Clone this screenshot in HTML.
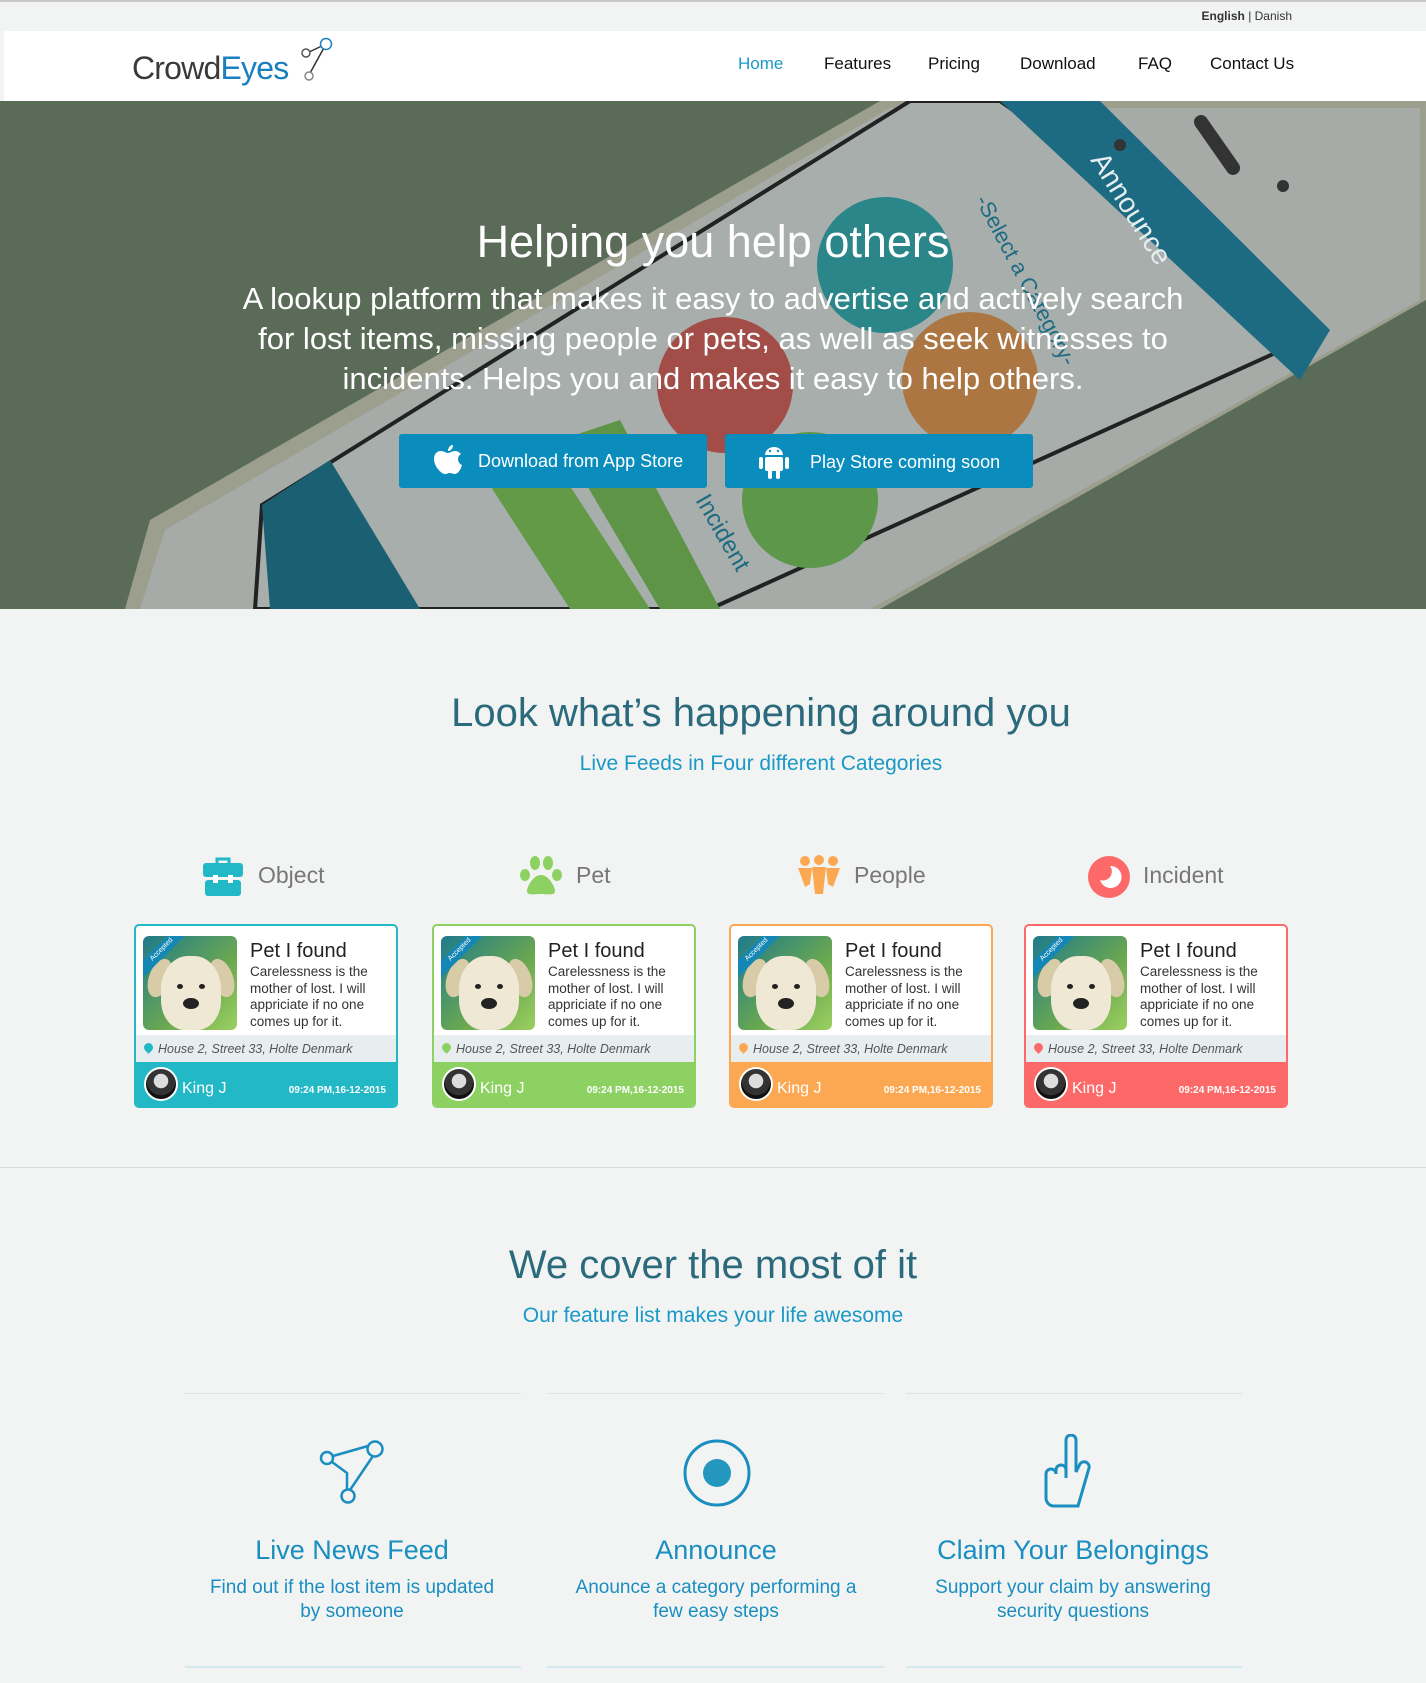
<!DOCTYPE html>
<html><head><meta charset="utf-8">
<style>
*{margin:0;padding:0;box-sizing:border-box}
body{width:1426px;height:1683px;background:#f2f4f3;font-family:"Liberation Sans",sans-serif;position:relative;overflow:hidden}
.abs{position:absolute}
.topbar{left:0;top:0;width:1426px;height:31px;background:#f2f4f3;border-top:2px solid #c8c8c8}
.lang{right:134px;top:9px;font-size:12px;color:#333}
.header{left:4px;top:31px;width:1422px;height:70px;background:#fff}
.nav a{position:absolute;top:54px;font-size:17px;color:#111;text-decoration:none}
.hero{left:0;top:101px;width:1426px;height:508px;overflow:hidden;background:#5b6d58}
.c{text-align:center;width:1426px;left:0}
.c2{text-align:center;width:1426px;left:48px}
.btn{top:434px;height:54px;width:308px;background:#0a8dbd;border-radius:3px;color:#fff;font-size:18px}
.cat{top:862px;font-size:23px;color:#777}
.card{top:924px;width:264px;height:184px;border:2px solid;border-radius:5px;background:#fff;overflow:hidden}
.card .img{position:absolute;left:7px;top:10px;width:94px;height:94px;border-radius:6px;background:linear-gradient(135deg,#1f7a8c,#6aa850 60%,#9cd060);overflow:hidden}
.card .dog{position:absolute;left:18px;top:20px;width:60px;height:74px;border-radius:45% 45% 40% 40%;background:#efe8d4}
.card .ear1,.card .ear2{position:absolute;top:22px;width:22px;height:40px;border-radius:50%;background:#d8cba8}
.card .ear1{left:6px;transform:rotate(20deg)}.card .ear2{left:68px;transform:rotate(-20deg)}
.card .nose{position:absolute;left:40px;top:62px;width:16px;height:11px;border-radius:50%;background:#222}
.card .e1,.card .e2{position:absolute;top:48px;width:6px;height:5px;border-radius:50%;background:#222}
.card .e1{left:34px}.card .e2{left:56px}
.card .rib{position:absolute;left:-16px;top:8px;width:70px;height:12px;background:#1487b5;transform:rotate(-45deg);color:#fff;font-size:7px;text-align:center;line-height:12px}
.card h4{position:absolute;left:114px;top:14px;font-size:20px;font-weight:normal;color:#222}
.card p{position:absolute;left:114px;top:38px;width:140px;font-size:13.5px;line-height:16.5px;color:#333}
.card .addr{position:absolute;left:0;top:109px;width:100%;height:27px;background:#e8eef0;font-size:12.5px;font-style:italic;color:#555;padding:7px 0 0 22px}
.card .pin{position:absolute;left:8px;top:8px;width:9px;height:9px;border-radius:50% 50% 50% 0;transform:rotate(-45deg)}
.card .foot{position:absolute;left:0;top:136px;width:100%;height:46px;color:#fff}
.card .av{position:absolute;left:8px;top:5px;width:34px;height:34px;border-radius:50%;background:radial-gradient(circle at 50% 40%,#ddd 0 30%,#333 32% 60%,#111 62%);border:2px solid #fff}
.card .nm{position:absolute;left:46px;top:18px;font-size:16px}
.card .dt{position:absolute;right:10px;top:23px;font-size:10px;font-weight:bold}
.h2{font-size:40px;color:#2b6a7c}
.sub{font-size:21px;color:#1a98c6}
.ln{height:1px;background:#dde3e3}
.bl{height:2px;background:#d3e8ef}
.fh{font-size:27px;color:#1a8ec0;text-align:center;width:360px}
.ft{font-size:19px;color:#1a8ec0;text-align:center;width:300px;line-height:24px}
</style></head><body>
<div class="abs topbar"></div>
<div class="abs lang"><b>English</b> | Danish</div>
<div class="abs header"></div>
<div class="abs" style="left:132px;top:50px;font-size:32px;color:#3a3a3a;letter-spacing:-0.8px">Crowd<span style="color:#1a7fc0">Eyes</span></div>
<svg class="abs" style="left:298px;top:36px" width="36" height="46" viewBox="0 0 36 46"><g fill="#fff" stroke-width="1.5"><line x1="9" y1="17" x2="28" y2="8" stroke="#333"/><line x1="28" y1="8" x2="11" y2="39" stroke="#333"/><circle cx="28" cy="8" r="5.5" stroke="#1a7fc0"/><circle cx="8" cy="17" r="4" stroke="#555"/><circle cx="11" cy="40" r="4" stroke="#888"/></g></svg>
<div class="nav">
<a style="left:738px;color:#1a9ac8">Home</a><a style="left:824px">Features</a><a style="left:928px">Pricing</a><a style="left:1020px">Download</a><a style="left:1138px">FAQ</a><a style="left:1210px">Contact Us</a>
</div>

<div class="abs hero">
<svg width="1426" height="508" viewBox="0 101 1426 508" style="position:absolute;left:0;top:0">
<rect x="0" y="101" width="1426" height="508" fill="#5a6c57"/>
<polygon points="125,609 150,520 880,101 1426,101 1426,300 880,609" fill="#9d9f8e"/>
<polygon points="140,609 165,530 890,108 1420,108 1420,300 870,609" fill="#a7aba8"/>
<polygon points="255,609 262,505 910,101 1000,101 1326,330 710,609" fill="#a8aeac" stroke="#222" stroke-width="4"/>
<polygon points="1000,101 1100,101 1330,330 1300,380" fill="#1d6b82"/>
<polygon points="262,505 330,460 420,609 270,609" fill="#1a5f72"/>
<circle cx="1120" cy="145" r="6" fill="#333"/><rect x="1210" y="110" width="14" height="70" rx="7" fill="#333" transform="rotate(-35 1217 145)"/>
<circle cx="1283" cy="186" r="6" fill="#333"/>
<circle cx="885" cy="265" r="68" fill="#2b8689"/>
<circle cx="725" cy="385" r="68" fill="#a24d48"/>
<circle cx="970" cy="380" r="68" fill="#ac7643"/>
<circle cx="810" cy="500" r="68" fill="#5c974a"/>
<polygon points="480,470 540,440 650,609 570,609" fill="#629a48"/>
<polygon points="560,440 620,420 720,609 660,609" fill="#5e9446"/>
<text x="1090" y="160" fill="#e6eef0" font-size="28" transform="rotate(58 1090 160)">Announce</text>
<text x="975" y="200" fill="#1d6b82" font-size="22" transform="rotate(62 975 200)">-Select a Category-</text>
<text x="695" y="500" fill="#1d6b82" font-size="24" transform="rotate(60 695 500)">Incident</text>
</svg>
</div>
<div class="abs c" style="top:216px;font-size:45px;color:#fff">Helping you help others</div>
<div class="abs c" style="top:279px;font-size:31px;line-height:40px;color:#fff">A lookup platform that makes it easy to advertise and actively search<br>for lost items, missing people or pets, as well as seek witnesses to<br>incidents. Helps you and makes it easy to help others.</div>
<div class="abs btn" style="left:399px"><svg class="abs" style="left:34px;top:10px" width="30" height="34" viewBox="0 0 30 34"><path d="M20 1c0 3-2 6-5 6 0-3 2-6 5-6zM15 9c2 0 4-2 7-2 3 0 5 2 6 3-4 2-4 9 1 11-1 4-4 9-7 9-2 0-3-1-5-1s-3 1-5 1C8 30 1 22 1 15 1 10 4 7 8 7c3 0 5 2 7 2z" fill="#fff"/></svg><span class="abs" style="left:79px;top:17px">Download from App Store</span></div>
<div class="abs btn" style="left:725px"><svg class="abs" style="left:34px;top:10px" width="30" height="36" viewBox="0 0 30 36"><g fill="#fff"><path d="M6 11a9 8 0 0 1 18 0z"/><rect x="6" y="13" width="18" height="14" rx="2"/><rect x="0" y="13" width="4" height="12" rx="2"/><rect x="26" y="13" width="4" height="12" rx="2"/><rect x="9" y="25" width="4" height="10" rx="2"/><rect x="17" y="25" width="4" height="10" rx="2"/></g><circle cx="11" cy="7" r="1.2" fill="#0a8dbd"/><circle cx="19" cy="7" r="1.2" fill="#0a8dbd"/></svg><span class="abs" style="left:85px;top:18px">Play Store coming soon</span></div>

<div class="abs c2 h2" style="top:691px">Look what’s happening around you</div>
<div class="abs c2 sub" style="top:752px">Live Feeds in Four different Categories</div>

<svg class="abs" style="left:203px;top:856px" width="40" height="40" viewBox="0 0 40 40"><path d="M14 7V3h12v4" stroke="#22b8c6" stroke-width="3" fill="none"/><rect x="0" y="7" width="40" height="14" rx="3" fill="#22b8c6"/><rect x="2" y="24" width="36" height="16" rx="3" fill="#22b8c6"/><rect x="10" y="19" width="5" height="8" fill="#fff"/><rect x="25" y="19" width="5" height="8" fill="#fff"/></svg>
<div class="abs cat" style="left:258px">Object</div>
<svg class="abs" style="left:520px;top:855px" width="42" height="42" viewBox="0 0 42 42" fill="#8dd162"><ellipse cx="15" cy="8" rx="5" ry="7"/><ellipse cx="28" cy="8" rx="5" ry="7"/><ellipse cx="5" cy="20" rx="5" ry="6"/><ellipse cx="37" cy="20" rx="5" ry="6"/><path d="M21 20c-8 0-14 12-14 16 0 5 7 3 14 3s14 2 14-3c0-4-6-16-14-16z"/></svg>
<div class="abs cat" style="left:576px">Pet</div>
<svg class="abs" style="left:797px;top:855px" width="44" height="42" viewBox="0 0 44 42" fill="#fca853"><circle cx="8" cy="6" r="5"/><circle cx="22" cy="5" r="5"/><circle cx="36" cy="6" r="5"/><path d="M1 13h14l-2 16-5 3z"/><path d="M29 13h14l-7 19-5-3z"/><path d="M15 12h14l-3 27h-8z"/></svg>
<div class="abs cat" style="left:854px">People</div>
<svg class="abs" style="left:1088px;top:856px" width="42" height="42" viewBox="0 0 42 42"><circle cx="21" cy="21" r="21" fill="#fd6868"/><path d="M22 10a11 11 0 1 1-10 14 9 9 0 0 0 10-14z" fill="#fff"/></svg>
<div class="abs cat" style="left:1143px">Incident</div>

<!-- cards -->
<div class="abs card" style="left:134px;border-color:#22b8c6"><div class="img"><div class="ear1"></div><div class="ear2"></div><div class="dog"></div><div class="e1"></div><div class="e2"></div><div class="nose"></div><div class="rib">Accepted</div></div><h4>Pet I found</h4><p>Carelessness is the mother of lost. I will appriciate if no one comes up for it.</p><div class="addr"><span class="pin" style="background:#22b8c6"></span>House 2, Street 33, Holte Denmark</div><div class="foot" style="background:#22b8c6"><div class="av"></div><div class="nm">King J</div><div class="dt">09:24 PM,16-12-2015</div></div></div>
<div class="abs card" style="left:432px;border-color:#8dd162"><div class="img"><div class="ear1"></div><div class="ear2"></div><div class="dog"></div><div class="e1"></div><div class="e2"></div><div class="nose"></div><div class="rib">Accepted</div></div><h4>Pet I found</h4><p>Carelessness is the mother of lost. I will appriciate if no one comes up for it.</p><div class="addr"><span class="pin" style="background:#8dd162"></span>House 2, Street 33, Holte Denmark</div><div class="foot" style="background:#8dd162"><div class="av"></div><div class="nm">King J</div><div class="dt">09:24 PM,16-12-2015</div></div></div>
<div class="abs card" style="left:729px;border-color:#fca853"><div class="img"><div class="ear1"></div><div class="ear2"></div><div class="dog"></div><div class="e1"></div><div class="e2"></div><div class="nose"></div><div class="rib">Accepted</div></div><h4>Pet I found</h4><p>Carelessness is the mother of lost. I will appriciate if no one comes up for it.</p><div class="addr"><span class="pin" style="background:#fca853"></span>House 2, Street 33, Holte Denmark</div><div class="foot" style="background:#fca853"><div class="av"></div><div class="nm">King J</div><div class="dt">09:24 PM,16-12-2015</div></div></div>
<div class="abs card" style="left:1024px;border-color:#fd6868"><div class="img"><div class="ear1"></div><div class="ear2"></div><div class="dog"></div><div class="e1"></div><div class="e2"></div><div class="nose"></div><div class="rib">Accepted</div></div><h4>Pet I found</h4><p>Carelessness is the mother of lost. I will appriciate if no one comes up for it.</p><div class="addr"><span class="pin" style="background:#fd6868"></span>House 2, Street 33, Holte Denmark</div><div class="foot" style="background:#fd6868"><div class="av"></div><div class="nm">King J</div><div class="dt">09:24 PM,16-12-2015</div></div></div>

<div class="abs ln" style="left:0;top:1167px;width:1426px;background:#d6dcdc"></div>

<div class="abs c h2" style="top:1243px">We cover the most of it</div>
<div class="abs c sub" style="top:1304px">Our feature list makes your life awesome</div>

<div class="abs ln" style="left:185px;top:1393px;width:336px"></div>
<div class="abs ln" style="left:547px;top:1393px;width:337px"></div>
<div class="abs ln" style="left:906px;top:1393px;width:336px"></div>

<svg class="abs" style="left:315px;top:1436px" width="72" height="72" viewBox="0 0 72 72" fill="none" stroke="#1a8ec0" stroke-width="2.5"><circle cx="12" cy="22" r="6"/><circle cx="60" cy="13" r="7.5"/><circle cx="33" cy="60" r="6.5"/><path d="M18 20l35-10M17 26l15 11v17M58 20l-23 34"/></svg>
<svg class="abs" style="left:682px;top:1438px" width="70" height="70" viewBox="0 0 70 70"><circle cx="35" cy="35" r="32" fill="none" stroke="#1a8ec0" stroke-width="3"/><circle cx="35" cy="35" r="14" fill="#2497be"/></svg>
<svg class="abs" style="left:1040px;top:1434px" width="72" height="76" viewBox="0 0 72 76" fill="none" stroke="#1a8ec0" stroke-width="3"><path d="M26 44V6a5 5 0 0 1 10 0v32l4-8a5 5 0 0 1 9 4L38 72H14a8 8 0 0 1-8-8V40a5 5 0 0 1 10 0V36a5 5 0 0 1 10 0"/></svg>

<div class="abs fh" style="left:172px;top:1535px">Live News Feed</div>
<div class="abs ft" style="left:202px;top:1576px">Find out if the lost item is updated by someone</div>
<div class="abs fh" style="left:536px;top:1535px">Announce</div>
<div class="abs ft" style="left:566px;top:1576px">Anounce a category performing a few easy steps</div>
<div class="abs fh" style="left:893px;top:1535px">Claim Your Belongings</div>
<div class="abs ft" style="left:923px;top:1576px">Support your claim by answering security questions</div>

<div class="abs bl" style="left:185px;top:1666px;width:336px"></div>
<div class="abs bl" style="left:547px;top:1666px;width:337px"></div>
<div class="abs bl" style="left:906px;top:1666px;width:336px"></div>
</body></html>
